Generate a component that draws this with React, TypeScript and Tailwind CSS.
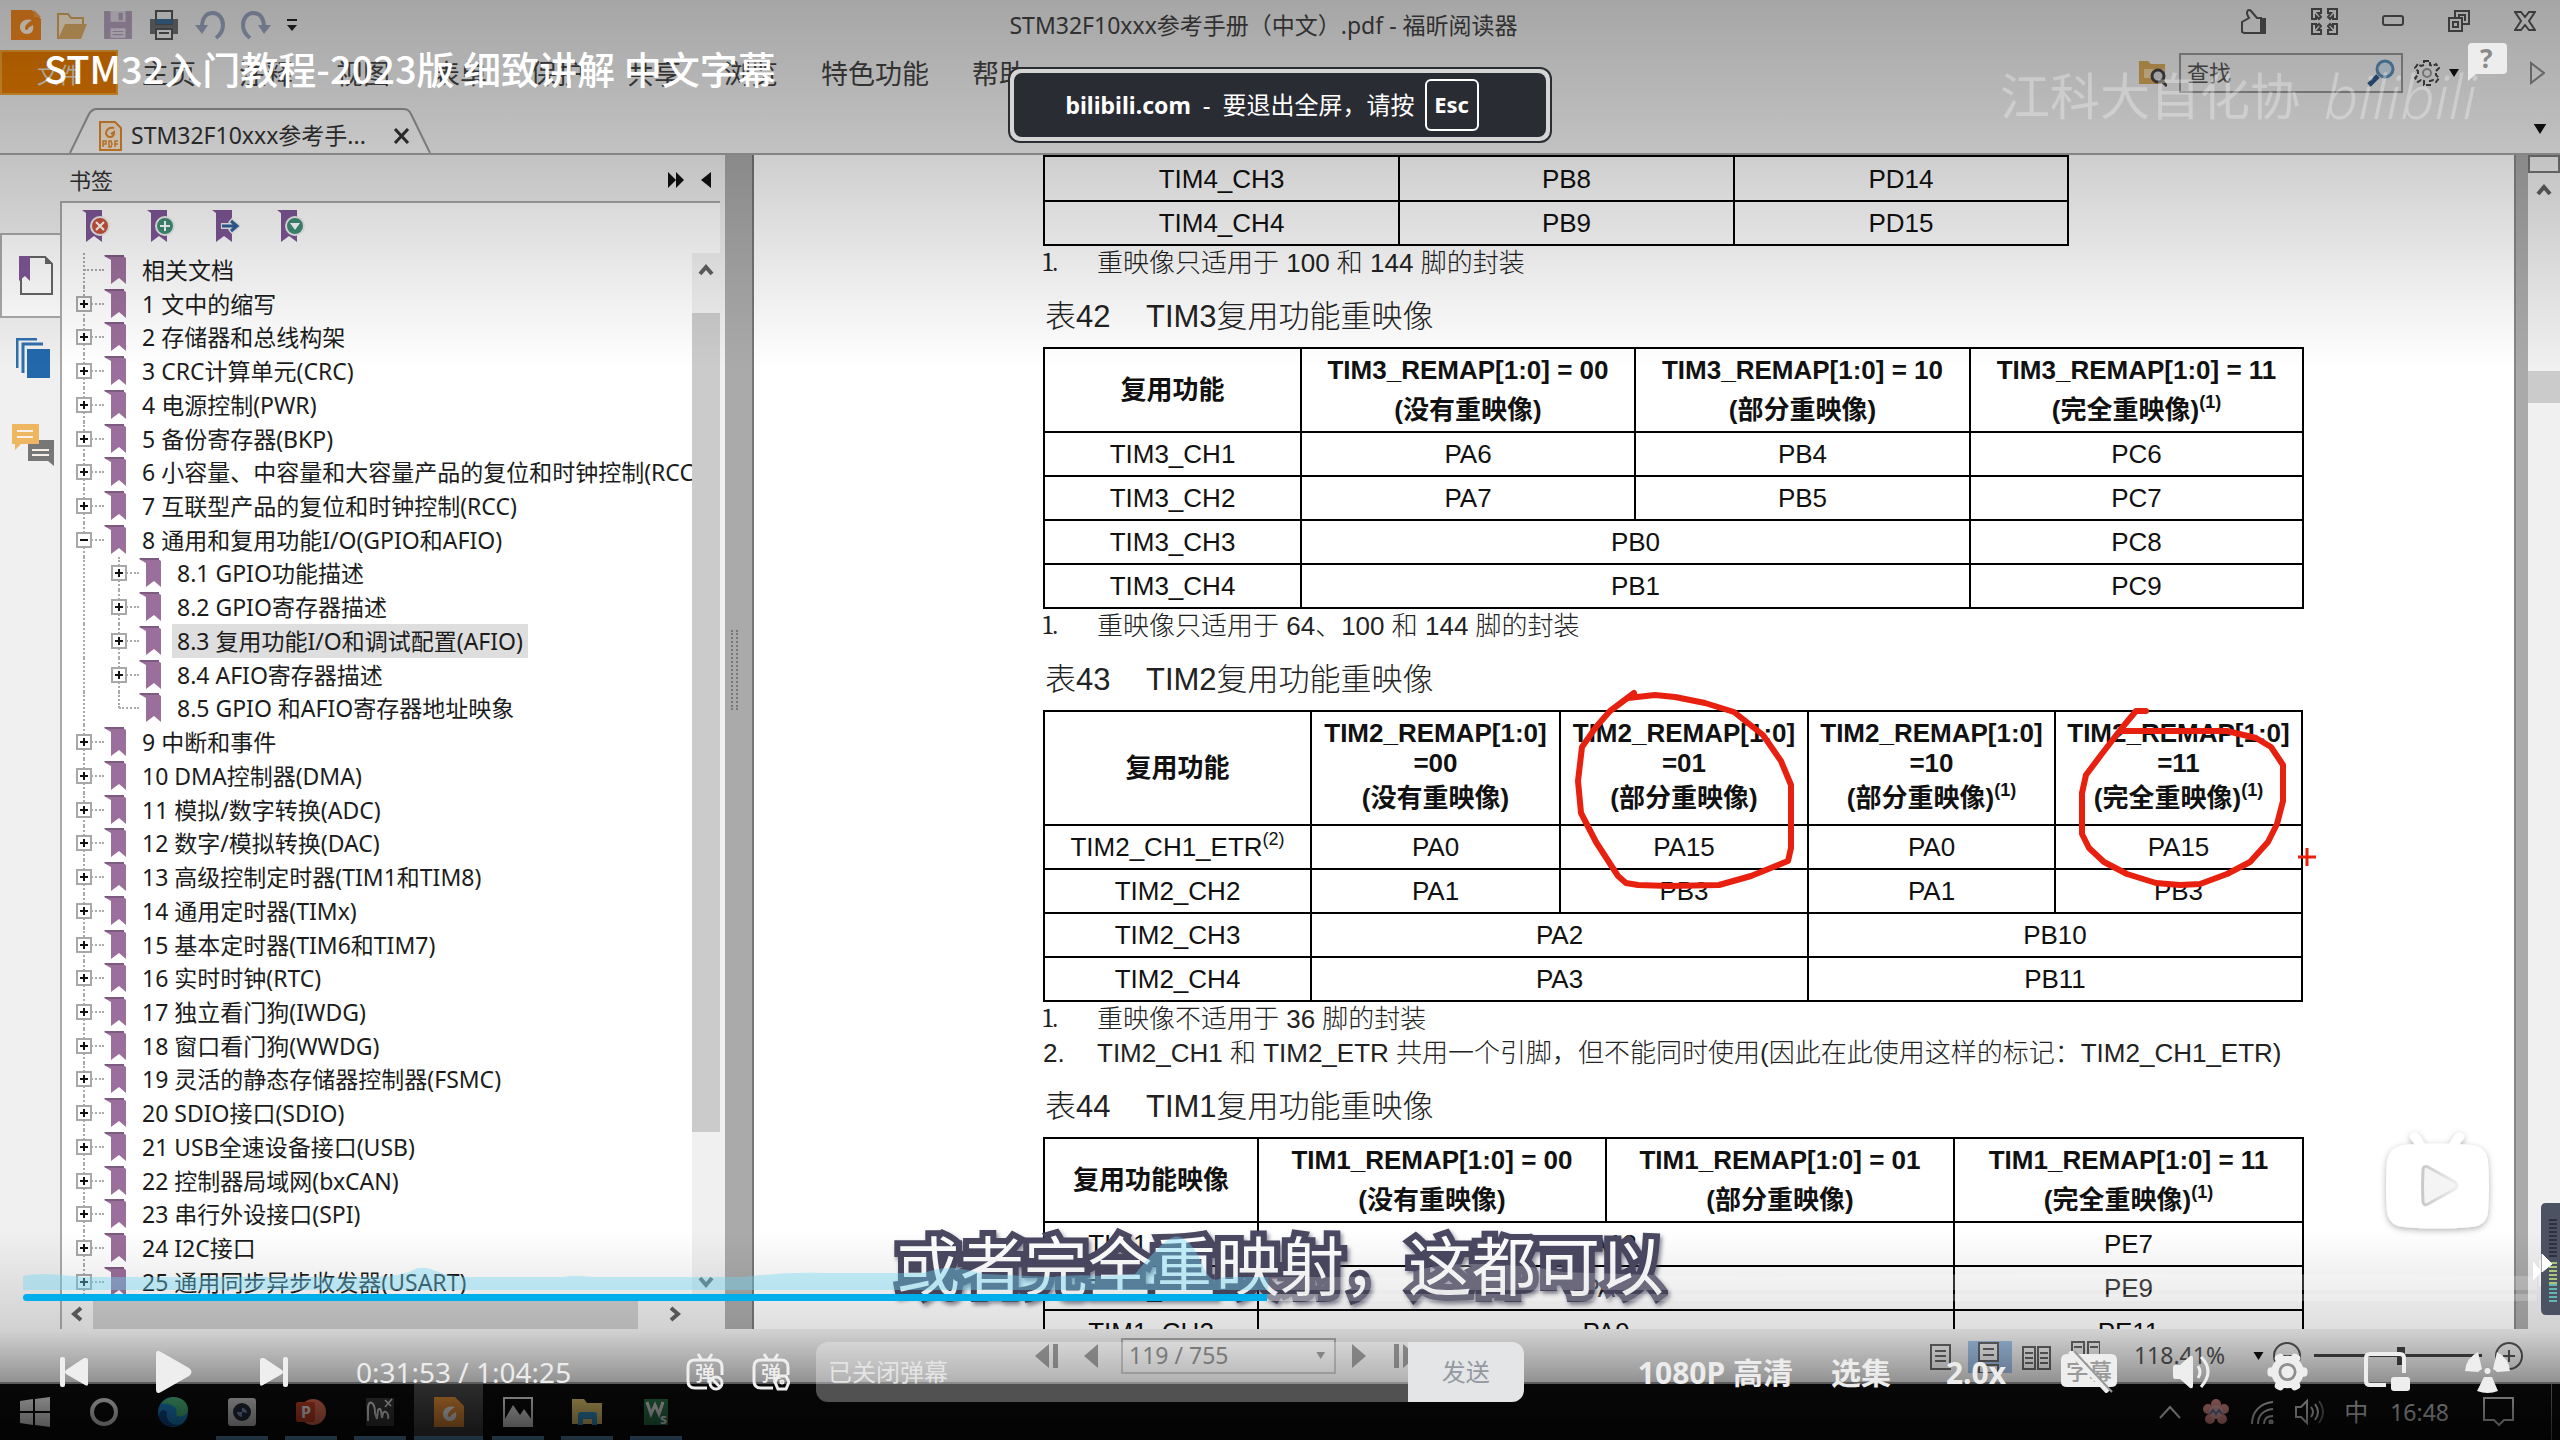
import React from 'react';

interface TreeNode {
  label: string;
  depth?: number;
  open?: boolean;
  leaf?: boolean;
  last?: boolean;
  selected?: boolean;
}

const bookmarks: TreeNode[] = [
  { label: '相关文档', leaf: true },
  { label: '1 文中的缩写' },
  { label: '2 存储器和总线构架' },
  { label: '3 CRC计算单元(CRC)' },
  { label: '4 电源控制(PWR)' },
  { label: '5 备份寄存器(BKP)' },
  { label: '6 小容量、中容量和大容量产品的复位和时钟控制(RCC)' },
  { label: '7 互联型产品的复位和时钟控制(RCC)' },
  { label: '8 通用和复用功能I/O(GPIO和AFIO)', open: true },
  { label: '8.1 GPIO功能描述', depth: 1 },
  { label: '8.2 GPIO寄存器描述', depth: 1 },
  { label: '8.3 复用功能I/O和调试配置(AFIO)', depth: 1, selected: true },
  { label: '8.4 AFIO寄存器描述', depth: 1 },
  { label: '8.5 GPIO 和AFIO寄存器地址映象', depth: 1, leaf: true, last: true },
  { label: '9 中断和事件' },
  { label: '10 DMA控制器(DMA)' },
  { label: '11 模拟/数字转换(ADC)' },
  { label: '12 数字/模拟转换(DAC)' },
  { label: '13 高级控制定时器(TIM1和TIM8)' },
  { label: '14 通用定时器(TIMx)' },
  { label: '15 基本定时器(TIM6和TIM7)' },
  { label: '16 实时时钟(RTC)' },
  { label: '17 独立看门狗(IWDG)' },
  { label: '18 窗口看门狗(WWDG)' },
  { label: '19 灵活的静态存储器控制器(FSMC)' },
  { label: '20 SDIO接口(SDIO)' },
  { label: '21 USB全速设备接口(USB)' },
  { label: '22 控制器局域网(bxCAN)' },
  { label: '23 串行外设接口(SPI)' },
  { label: '24 I2C接口' },
  { label: '25 通用同步异步收发器(USART)' },
];

const menus = ['主页', '注释', '视图', '表单', '保护', '共享', '浏览', '特色功能', '帮助'];

/* ---------- small drawings ---------- */

const FoxitIcon = ({ className = '' }: { className?: string }) => (
  <svg className={className} viewBox="0 0 30 30">
    <path d="M0 0h21l9 9v21H0z" fill="#f58a1f" />
    <path d="M23 0l7 7h-7z" fill="#f7a14d" />
    <path d="M21 10c-7-2-12 2-12 7 0 4 3 7 7 7 5 0 7-4 6-9l-5 3c1 2-3 3-3 0 0-3 3-5 7-8z" fill="#fff4e3" />
  </svg>
);

const Bookmark = ({ className = '' }: { className?: string }) => (
  <svg className={className} viewBox="0 0 22 30">
    <path d="M0 1h19l3 2v26l-7-6-8 6V5z" fill="#9b6f9b" />
    <path d="M0 0h20v2H2z" fill="#7d5a80" />
  </svg>
);

const Chevron = ({ className = '' }: { className?: string }) => (
  <svg className={className} viewBox="0 0 16 12">
    <path d="M2 10l6-7 6 7" fill="none" stroke="#606060" strokeWidth="4" />
  </svg>
);

const DownTriangle = ({ className = '' }: { className?: string }) => (
  <svg className={className} viewBox="0 0 10 8">
    <path d="M0 0h10L5 8z" fill="#111" />
  </svg>
);

const TitleBar = () => (
  <div className="flex h-[50px] shrink-0 items-center">
    <div className="flex flex-1 items-center gap-4 pl-[11px]">
      <FoxitIcon className="size-[30px]" />
      <svg className="size-[30px]" viewBox="0 0 30 30">
        <path d="M1 29V4h10l3 4h12v7" fill="#fdf0d5" stroke="#d9aa5f" strokeWidth="2" />
        <path d="M1 29l7-15h22l-6 15z" fill="#e0b067" />
      </svg>
      <svg className="size-[30px]" viewBox="0 0 28 28">
        <path d="M1 1h26v26H1z" fill="#b5a3bd" />
        <path d="M7 1h14v10H7zM7 17h14v9H7z" fill="#e3dbe6" />
        <path d="M15 3h3v6h-3zM9 20h10M9 23h10" stroke="#b5a3bd" fill="#b5a3bd" />
      </svg>
      <svg className="size-[30px]" viewBox="0 0 30 30">
        <path d="M1 9h28v15H1z" fill="#6f7173" />
        <path d="M7 1h16v13H7zM7 19h16v10H7z" fill="#f2f2f2" stroke="#55585a" strokeWidth="2" />
        <path d="M7 9h16v5H7z" fill="#3f6f9c" />
        <path d="M10 23h10" stroke="#555" strokeWidth="2" />
      </svg>
      <svg className="size-[30px]" viewBox="0 0 30 30">
        <path d="M7 17C7 8 11 3 18 3c6 0 10 6 10 12 0 6-3 10-7 13" fill="none" stroke="#9aa6c0" strokeWidth="4" />
        <path d="M0 15h13l-6 9z" fill="#9aa6c0" />
      </svg>
      <svg className="size-[30px]" viewBox="0 0 30 30">
        <path d="M23 17C23 8 19 3 12 3 6 3 2 9 2 15c0 6 3 10 7 13" fill="none" stroke="#9aa6c0" strokeWidth="4" />
        <path d="M30 15H17l6 9z" fill="#9aa6c0" />
      </svg>
      <svg className="h-3 w-[10px]" viewBox="0 0 10 12">
        <path d="M0 1h10" stroke="#222" strokeWidth="2" />
        <path d="M0 6h10l-5 6z" fill="#222" />
      </svg>
    </div>
    <h1 className="pr-[20px] text-[23px] text-[#444]">STM32F10xxx参考手册（中文）.pdf - 福昕阅读器</h1>
    <div className="flex flex-1 items-center justify-end gap-11 pr-6 pb-2">
      <button aria-label="点赞">
        <svg className="size-[27px]" viewBox="0 0 27 27">
          <path d="M2 24V14l7-4c-4-6-1-10 2-7l6 7h4v15H4z" fill="none" stroke="#555" strokeWidth="2" />
          <path d="M21 10h5v16h-5z" fill="#555" />
        </svg>
      </button>
      <button aria-label="全屏">
        <svg className="size-[27px]" viewBox="0 0 27 27" fill="none" stroke="#555" strokeWidth="2">
          <path d="M1 1h9v4H7l3 4-2 2-3-3v3H1zM26 1h-9v4h3l-3 4 2 2 3-3v3h4zM1 26h9v-4H7l3-4-2-2-3 3v-3H1zM26 26h-9v-4h3l-3-4 2-2 3 3v-3h4z" />
        </svg>
      </button>
      <button aria-label="最小化">
        <svg className="h-3 w-[22px]" viewBox="0 0 22 12">
          <rect x="1" y="1" width="20" height="9" rx="2" fill="none" stroke="#555" strokeWidth="2" />
        </svg>
      </button>
      <button aria-label="还原">
        <svg className="size-[22px]" viewBox="0 0 22 22" fill="none" stroke="#555" strokeWidth="2">
          <path d="M1 8h13v13H1zM5 12h5v5H5zM7 7V1h14v13h-6M11 7V5h6v6" />
        </svg>
      </button>
      <button aria-label="关闭">
        <svg className="h-5 w-[22px]" viewBox="0 0 22 20">
          <path d="M1 1h6l4 5 4-5h6l-6 9 6 9h-6l-4-5-4 5H1l6-9z" fill="none" stroke="#555" strokeWidth="2" />
        </svg>
      </button>
    </div>
  </div>
);

const MenuBar = () => (
  <div className="flex h-[45px] shrink-0 items-center">
    <button className="h-full w-[118px] border-2 border-[#f0a030] bg-[#e67a00] pt-1 text-[22px] text-[#e8e0d0]">文件</button>
    <nav className="flex gap-[43px] pt-1 pl-6 text-[27px] text-[#444]">
      {menus.map((m) => (
        <button key={m}>{m}</button>
      ))}
    </nav>
    <div className="ml-auto flex items-center pr-[15px]">
      <svg className="mr-3 size-7" viewBox="0 0 28 28">
        <path d="M0 2h9l3 3h14v20H0z" fill="#d9a95c" />
        <path d="M5 10h20v9H5z" fill="#f0d3a0" />
        <circle cx="19" cy="17" r="6" fill="#d8d8d8" stroke="#444" strokeWidth="3" />
        <path d="M23 22l5 5" stroke="#444" strokeWidth="3" />
      </svg>
      <label className="flex h-10 w-[224px] items-center border-2 border-[#999] px-[6px]">
        <input aria-label="查找" placeholder="查找" className="min-w-0 flex-1 bg-transparent text-[22px] outline-none placeholder:text-[#555]" />
        <svg className="size-7" viewBox="0 0 28 28">
          <circle cx="18" cy="10" r="8" fill="#d3e3ef" stroke="#5b8fb8" strokeWidth="3" />
          <path d="M11 17l-9 9" stroke="#2c5b8a" strokeWidth="5" />
        </svg>
      </label>
      <svg className="mr-2 ml-[11px] size-[26px]" viewBox="0 0 26 26" fill="none" stroke="#444" strokeWidth="2">
        <path d="M10 1h6v4l3 1 3-2 3 4-3 3v4l3 3-3 4-3-2-3 1v4h-6v-4l-3-1-3 2-3-4 3-3v-4L1 8l3-4 3 2 3-1z" strokeDasharray="5 2" />
        <circle cx="13" cy="13" r="4" stroke="#999" />
      </svg>
      <DownTriangle className="mr-[70px] h-2 w-3" />
      <svg className="h-6 w-[15px]" viewBox="0 0 15 24">
        <path d="M1 2l13 10L1 22z" fill="none" stroke="#888" strokeWidth="2" />
      </svg>
    </div>
  </div>
);

const TabBar = () => (
  <div className="flex h-[60px] shrink-0 items-end border-b-2 border-[#a5a5a5]">
    <div className="relative ml-[69px] h-[45px] w-[362px]">
      <svg className="absolute inset-0 size-full" viewBox="0 0 362 45" preserveAspectRatio="none">
        <path d="M1 45L20 6q3-5 8-5h306q6 0 8 5l19 39" fill="#f7f7f7" stroke="#9a9a9a" strokeWidth="2" />
      </svg>
      <div className="relative flex h-full items-center pt-[10px] pl-[30px]">
        <svg className="h-[30px] w-[23px]" viewBox="0 0 23 30">
          <path d="M1 1h15l6 6v22H1z" fill="#fdebd5" stroke="#e08a2c" strokeWidth="2" />
          <path d="M15 7c-5-1-8 2-8 5 0 2 2 4 4 4 3 0 4-2 4-5l-3 2" fill="none" stroke="#e08a2c" strokeWidth="2" />
          <path d="M4 26v-6h3v3H4M10 20v6h2l1-3-1-3zM16 26v-6h3M16 23h3" fill="none" stroke="#e08a2c" strokeWidth="1.5" />
        </svg>
        <span className="ml-[9px] text-[23px] text-[#333]">STM32F10xxx参考手...</span>
        <button aria-label="关闭标签" className="mr-[21px] ml-auto">
          <svg className="h-4 w-[17px]" viewBox="0 0 17 16">
            <path d="M2 1l13 14M15 1L2 15" stroke="#333" strokeWidth="3" />
          </svg>
        </button>
      </div>
    </div>
    <DownTriangle className="mr-[11px] mb-[19px] ml-auto h-[10px] w-[18px]" />
  </div>
);

const TreeRow = ({ node }: { node: TreeNode }) => (
  <li className="flex min-h-0 flex-1 items-center">
    {node.depth === 1 && <span className="ml-[7px] w-7 shrink-0 self-stretch border-l-2 border-dotted border-[#aaa]" />}
    <span className="relative flex w-7 shrink-0 items-center self-stretch">
      <span className={`absolute top-0 left-[7px] border-l-2 border-dotted border-[#aaa] ${node.last ? 'h-1/2' : 'h-full'}`} />
      <span className="absolute right-0 left-2 border-t-2 border-dotted border-[#aaa]" />
      {!node.leaf && (
        <svg className="relative size-4" viewBox="0 0 16 16">
          <rect x="1" y="1" width="14" height="14" fill="#fff" stroke="#a8a8a8" strokeWidth="2" />
          <path d={node.open ? 'M4 8h8' : 'M4 8h8M8 4v8'} stroke="#111" strokeWidth="2" />
        </svg>
      )}
    </span>
    <Bookmark className="h-[30px] w-[22px] shrink-0" />
    <button className={`ml-[11px] h-full px-[5px] text-[23px] leading-8 whitespace-nowrap text-[#1c1c1c] ${node.selected ? 'bg-[#dedede]' : ''}`}>
      {node.label}
    </button>
  </li>
);

const BookmarkTool = ({ label, children }: { label: string; children: React.ReactNode }) => (
  <button aria-label={label}>
    <svg className="h-8 w-7" viewBox="0 0 28 32">
      <path d="M0 0h20v32l-8-6-8 6V3z" fill="#7f5696" />
      {children}
    </svg>
  </button>
);

const Sidebar = () => (
  <aside className="flex w-[725px] shrink-0 flex-col pr-[5px]">
    <div className="flex h-[46px] shrink-0 items-center pt-1 pr-[9px] pl-[69px]">
      <h2 className="text-[22px] text-[#333]">书签</h2>
      <svg className="ml-auto h-4 w-4" viewBox="0 0 16 16">
        <path d="M0 0l8 8-8 8zM8 0l8 8-8 8z" fill="#111" />
      </svg>
      <svg className="ml-[17px] h-4 w-[10px]" viewBox="0 0 10 16">
        <path d="M10 0v16L0 8z" fill="#111" />
      </svg>
    </div>
    <div className="flex min-h-0 flex-1">
      <div className="w-[60px] shrink-0 pt-8">
        <button aria-label="书签面板" className="-mr-[2px] flex h-[85px] w-[62px] items-center justify-center border-2 border-r-0 border-[#aaa] bg-white pl-2">
          <svg className="h-[40px] w-[34px]" viewBox="0 0 34 40">
            <path d="M2 1h24l7 7v30H2z" fill="#fff" stroke="#666" strokeWidth="2" />
            <path d="M0 0h11v25l-5-5-6 5z" fill="#7f5696" />
            <path d="M26 0l8 8h-8z" fill="#666" />
          </svg>
        </button>
        <div className="flex flex-col items-center gap-[46px] pt-5 pl-[6px]">
          <button aria-label="页面面板">
            <svg className="h-10 w-[34px]" viewBox="0 0 34 40">
              <path d="M1 30V1h20M7 35V6h20" fill="none" stroke="#2f6fae" strokeWidth="3" />
              <path d="M11 11h23v29H11z" fill="#2268ab" />
            </svg>
          </button>
          <button aria-label="注释面板">
            <svg className="h-[42px] w-[42px]" viewBox="0 0 42 42">
              <path d="M16 16h26v26l-6-5H16z" fill="#777" />
              <path d="M0 0h27v20H9l-6 6v-6H0z" fill="#efb662" />
              <path d="M5 7h16M5 13h16M20 26h17M20 31h17" stroke="#f6f0e6" strokeWidth="2" />
            </svg>
          </button>
        </div>
      </div>
      <div className="flex min-w-0 flex-1 flex-col border-t-2 border-l-2 border-[#aaa] bg-white">
        <div className="flex h-[50px] shrink-0 items-center gap-[37px] pb-1 pl-5">
          <BookmarkTool label="删除书签">
            <circle cx="18" cy="16" r="9" fill="#c9543d" stroke="#eee" strokeWidth="2" />
            <path d="M14 12l8 8M22 12l-8 8" stroke="#fff" strokeWidth="2" />
          </BookmarkTool>
          <BookmarkTool label="新建书签">
            <circle cx="18" cy="16" r="9" fill="#3e8f77" stroke="#eee" strokeWidth="2" />
            <path d="M13 16h10M18 11v10" stroke="#fff" strokeWidth="2" />
          </BookmarkTool>
          <BookmarkTool label="转到书签">
            <path d="M9 16h13M18 10l7 6-7 6" fill="none" stroke="#eee" strokeWidth="6" />
            <path d="M10 16h14M19 11l6 5-6 5" fill="none" stroke="#2f6098" strokeWidth="3" />
          </BookmarkTool>
          <BookmarkTool label="展开书签">
            <circle cx="18" cy="16" r="9" fill="#3e8f77" stroke="#eee" strokeWidth="2" />
            <path d="M13 13h10l-5 7z" fill="#fff" />
          </BookmarkTool>
        </div>
        <div className="flex min-h-0 flex-1">
          <ul className="flex min-w-0 flex-1 flex-col overflow-hidden pl-[14px]">
            {bookmarks.map((node) => (
              <TreeRow key={node.label} node={node} />
            ))}
          </ul>
          <div className="flex w-7 shrink-0 flex-col items-center bg-[#f0f0f0] py-[10px]">
            <Chevron className="h-[14px] w-4" />
            <div className="mt-9 w-full grow-[817] bg-[#cbcbcb]" />
            <div className="grow-[143]" />
            <Chevron className="h-[14px] w-4 rotate-180" />
          </div>
        </div>
        <div className="flex h-[30px] shrink-0 items-center bg-[#f0f0f0] px-[7px]">
          <Chevron className="h-3 w-4 -rotate-90" />
          <div className="ml-2 h-full w-[545px] bg-[#cdcdcd]" />
          <Chevron className="ml-auto mr-[30px] h-3 w-4 rotate-90" />
        </div>
      </div>
    </div>
  </aside>
);

/* ---------- the manual page ---------- */

const Cell = ({ children, span = 1 }: { children?: React.ReactNode; span?: number }) => (
  <td colSpan={span} className="border-2 border-black p-0 text-center leading-8">
    {children}
  </td>
);

const Sup = ({ children }: { children: React.ReactNode }) => (
  <sup className="-top-[11px] text-[18px]">{children}</sup>
);

const Head = ({ lines, note }: { lines: string[]; note?: string }) => (
  <th className="border-2 border-black p-0 text-center font-bold whitespace-nowrap">
    {lines.map((line, i) => (
      <div key={line} className={i === lines.length - 1 || lines.length === 2 ? 'leading-10' : 'leading-[30px]'}>
        {line}
        {note && i === lines.length - 1 && <Sup>{note}</Sup>}
      </div>
    ))}
  </th>
);

const Note = ({ n, serif, children }: { n: string; serif?: boolean; children: React.ReactNode }) => (
  <p className="flex h-[34px] items-center text-[26px] font-light whitespace-nowrap text-[#222]">
    <span className={`w-[54px] ${serif ? 'font-serif' : ''}`}>{n}</span>
    <span>{children}</span>
  </p>
);

const Caption = ({ no, children }: { no: string; children: React.ReactNode }) => (
  <h3 className="flex h-[67px] items-center pt-2 pl-[2px] text-[31px] font-light text-[#222]">
    <span className="w-[101px]">{no}</span>
    <span>{children}</span>
  </h3>
);

const tableClass = 'table-fixed border-collapse text-[26px] text-[#111]';

const ManualPage = () => (
  <main className='relative min-w-0 flex-1 overflow-hidden bg-white pl-[289px] font-["Liberation_Sans","Noto_Sans_CJK_SC",sans-serif]'>
    <table className={`${tableClass} w-[1026px]`}>
      <colgroup>
        <col className="w-[355px]" />
        <col className="w-[335px]" />
        <col />
      </colgroup>
      <tbody>
        <tr className="h-[45px]"><Cell>TIM4_CH3</Cell><Cell>PB8</Cell><Cell>PD14</Cell></tr>
        <tr className="h-[44px]"><Cell>TIM4_CH4</Cell><Cell>PB9</Cell><Cell>PD15</Cell></tr>
      </tbody>
    </table>
    <Note n="1." serif>重映像只适用于 100 和 144 脚的封装</Note>

    <Caption no="表42">TIM3复用功能重映像</Caption>
    <table className={`${tableClass} w-[1261px]`}>
      <colgroup>
        <col className="w-[257px]" />
        <col className="w-[334px]" />
        <col className="w-[335px]" />
        <col />
      </colgroup>
      <thead>
        <tr className="h-[84px]">
          <Head lines={['复用功能']} />
          <Head lines={['TIM3_REMAP[1:0] = 00', '(没有重映像)']} />
          <Head lines={['TIM3_REMAP[1:0] = 10', '(部分重映像)']} />
          <Head lines={['TIM3_REMAP[1:0] = 11', '(完全重映像)']} note="(1)" />
        </tr>
      </thead>
      <tbody>
        <tr className="h-[44px]"><Cell>TIM3_CH1</Cell><Cell>PA6</Cell><Cell>PB4</Cell><Cell>PC6</Cell></tr>
        <tr className="h-[44px]"><Cell>TIM3_CH2</Cell><Cell>PA7</Cell><Cell>PB5</Cell><Cell>PC7</Cell></tr>
        <tr className="h-[44px]"><Cell>TIM3_CH3</Cell><Cell span={2}>PB0</Cell><Cell>PC8</Cell></tr>
        <tr className="h-[44px]"><Cell>TIM3_CH4</Cell><Cell span={2}>PB1</Cell><Cell>PC9</Cell></tr>
      </tbody>
    </table>
    <Note n="1." serif>重映像只适用于 64、100 和 144 脚的封装</Note>

    <Caption no="表43">TIM2复用功能重映像</Caption>
    <table className={`${tableClass} w-[1260px]`}>
      <colgroup>
        <col className="w-[267px]" />
        <col className="w-[249px]" />
        <col className="w-[248px]" />
        <col className="w-[247px]" />
        <col />
      </colgroup>
      <thead>
        <tr className="h-[114px]">
          <Head lines={['复用功能']} />
          <Head lines={['TIM2_REMAP[1:0]', '=00', '(没有重映像)']} />
          <Head lines={['TIM2_REMAP[1:0]', '=01', '(部分重映像)']} />
          <Head lines={['TIM2_REMAP[1:0]', '=10', '(部分重映像)']} note="(1)" />
          <Head lines={['TIM2_REMAP[1:0]', '=11', '(完全重映像)']} note="(1)" />
        </tr>
      </thead>
      <tbody>
        <tr className="h-[44px]">
          <Cell>TIM2_CH1_ETR<Sup>(2)</Sup></Cell>
          <Cell>PA0</Cell><Cell>PA15</Cell><Cell>PA0</Cell><Cell>PA15</Cell>
        </tr>
        <tr className="h-[44px]"><Cell>TIM2_CH2</Cell><Cell>PA1</Cell><Cell>PB3</Cell><Cell>PA1</Cell><Cell>PB3</Cell></tr>
        <tr className="h-[44px]"><Cell>TIM2_CH3</Cell><Cell span={2}>PA2</Cell><Cell span={2}>PB10</Cell></tr>
        <tr className="h-[44px]"><Cell>TIM2_CH4</Cell><Cell span={2}>PA3</Cell><Cell span={2}>PB11</Cell></tr>
      </tbody>
    </table>
    <Note n="1." serif>重映像不适用于 36 脚的封装</Note>
    <Note n="2.">TIM2_CH1 和 TIM2_ETR 共用一个引脚，但不能同时使用(因此在此使用这样的标记：TIM2_CH1_ETR)</Note>

    <Caption no="表44">TIM1复用功能重映像</Caption>
    <table className={`${tableClass} w-[1261px]`}>
      <colgroup>
        <col className="w-[214px]" />
        <col className="w-[348px]" />
        <col className="w-[348px]" />
        <col />
      </colgroup>
      <thead>
        <tr className="h-[84px]">
          <Head lines={['复用功能映像']} />
          <Head lines={['TIM1_REMAP[1:0] = 00', '(没有重映像)']} />
          <Head lines={['TIM1_REMAP[1:0] = 01', '(部分重映像)']} />
          <Head lines={['TIM1_REMAP[1:0] = 11', '(完全重映像)']} note="(1)" />
        </tr>
      </thead>
      <tbody>
        <tr className="h-[44px]"><Cell>TIM1_ETR</Cell><Cell span={2}>PA12</Cell><Cell>PE7</Cell></tr>
        <tr className="h-[44px]"><Cell>TIM1_CH1</Cell><Cell span={2}>PA8</Cell><Cell>PE9</Cell></tr>
        <tr className="h-[44px]"><Cell>TIM1_CH2</Cell><Cell span={2}>PA9</Cell><Cell>PE11</Cell></tr>
      </tbody>
    </table>

    {/* hand-drawn pen marks */}
    <svg className="pointer-events-none absolute top-0 left-0 h-[800px] w-[1700px]" viewBox="754 155 1700 800" fill="none" stroke="#e8200f" strokeWidth="6" strokeLinejoin="round" strokeLinecap="round">
      <path d="M1634 693L1610 711L1596 727L1582 747L1578 781L1581 813L1596 842L1618 876L1626 883L1638 885L1669 886L1719 885L1751 876L1788 861L1791 848L1791 785L1781 761L1763 735L1734 712L1705 703L1675 697L1655 695L1628 698" />
      <path d="M2146 711H2136L2121 729L2101 755L2086 775L2082 793V834L2089 848L2104 862L2127 874L2156 883L2180 885L2200 884L2227 874L2250 862L2268 842L2277 824L2283 801V765L2271 747L2256 738L2227 731H2121" />
      <path d="M2298 857h18M2307 848v18" strokeWidth="3" strokeLinecap="butt" />
    </svg>
  </main>
);

const StatusBar = () => (
  <div className="flex h-[55px] shrink-0 items-center border-b-2 border-[#999] bg-[#f0f0f0]">
    <div className="flex items-center pl-[1035px]">
      <svg className="mr-[26px] h-6 w-[23px]" viewBox="0 0 23 24">
        <path d="M14 0v24L0 12zM18 0h5v24h-5z" fill="#666" />
      </svg>
      <svg className="mr-[23px] h-6 w-[14px]" viewBox="0 0 14 24"><path d="M14 0v24L0 12z" fill="#666" /></svg>
      <label className="flex h-9 w-[215px] items-center border-2 border-[#aaa] bg-[#f6f6f6] pr-2">
        <select aria-label="页码" className="w-full appearance-none bg-transparent pl-[6px] text-[23px] text-[#555]">
          <option>119 / 755</option>
        </select>
        <DownTriangle className="h-[7px] w-[10px] opacity-60" />
      </label>
      <svg className="ml-4 h-6 w-[14px]" viewBox="0 0 14 24"><path d="M0 0v24l14-12z" fill="#666" /></svg>
      <svg className="ml-7 h-6 w-[23px]" viewBox="0 0 23 24"><path d="M9 0v24l14-12zM0 0h5v24H0z" fill="#666" /></svg>
    </div>
    <div className="ml-auto flex items-center pr-9">
      <svg className="mt-[2px] h-8 w-[170px]" viewBox="0 0 170 32" fill="none" stroke="#666" strokeWidth="2">
        <path d="M38 0h44v32H38z" fill="#9fbfe4" stroke="none" />
        <path d="M1 4h19v24H1zM5 10h11M5 15h11M5 20h11" />
        <path d="M49 2h19v18H49zM53 8h11M53 14h11M49 24h19v8H49z" fill="#f0f0f0" />
        <path d="M93 6h12v22H93zM108 6h12v22h-12zM95 12h8M95 17h8M95 22h8M110 12h8M110 17h8M110 22h8" />
        <path d="M142 1h12v13h-12zM158 1h12v13h-12zM144 6h8M160 6h8M142 18h12v13h-12zM158 18h12v13h-12z" />
      </svg>
      <span className="ml-[34px] text-[23px] text-[#555]">118.41%</span>
      <DownTriangle className="ml-7 h-2 w-[11px]" />
      <svg className="ml-2 size-[30px]" viewBox="0 0 30 30" fill="none" stroke="#555" strokeWidth="2">
        <circle cx="15" cy="15" r="13" /><path d="M9 15h12" />
      </svg>
      <input
        type="range"
        aria-label="缩放"
        defaultValue={52}
        className="mx-3 h-[3px] w-[168px] appearance-none bg-[#444] [&::-webkit-slider-thumb]:h-[18px] [&::-webkit-slider-thumb]:w-2 [&::-webkit-slider-thumb]:appearance-none [&::-webkit-slider-thumb]:bg-[#444]"
      />
      <svg className="size-[30px]" viewBox="0 0 30 30" fill="none" stroke="#555" strokeWidth="2">
        <circle cx="15" cy="15" r="13" /><path d="M9 15h12M15 9v12" />
      </svg>
    </div>
  </div>
);

/* ---------- windows taskbar ---------- */

const TaskButton = ({ label, running, active, children }: { label: string; running?: boolean; active?: boolean; children: React.ReactNode }) => (
  <button aria-label={label} className={`flex w-[69px] flex-col items-center justify-between pt-[13px] ${active ? 'bg-[#4a4a4a]' : ''}`}>
    <svg className="size-[30px]" viewBox="0 0 30 30">{children}</svg>
    <span className={`h-1 ${active ? 'w-full' : 'w-[52px]'} ${running ? 'bg-[#76b9ed]' : ''}`} />
  </button>
);

const Taskbar = () => (
  <footer className="flex h-14 shrink-0 items-stretch bg-[#0c0c0c]">
    <TaskButton label="开始">
      <path d="M0 4l13-2v12H0zM15 2l15-2v14H15zM0 16h13v12L0 26zM15 16h15v14l-15-2z" fill="#fff" />
    </TaskButton>
    <TaskButton label="Cortana">
      <circle cx="15" cy="15" r="12" fill="none" stroke="#eee" strokeWidth="4" />
    </TaskButton>
    <TaskButton label="Edge">
      <circle cx="15" cy="15" r="15" fill="#1f8fd6" />
      <path d="M3 7C10-4 30-1 30 13c0 6-9 8-12 5 3-7-5-13-15-11z" fill="#4fc98a" />
      <path d="M9 15c-2 8 5 15 14 12-6 4-19 3-22-7 0-7 5-9 8-5z" fill="#0f4f9b" />
    </TaskButton>
    <TaskButton label="相机" running>
      <rect x="1" y="1" width="28" height="28" rx="3" fill="#ddd" />
      <circle cx="15" cy="15" r="9" fill="#26303c" />
      <path d="M15 11a5 5 0 0 1 5 5l-5-1zM15 20a5 5 0 0 1-5-5h5z" fill="#7f9cc0" />
    </TaskButton>
    <TaskButton label="PowerPoint" running>
      <circle cx="17" cy="15" r="13" fill="#f0745a" />
      <rect x="0" y="5" width="19" height="20" rx="2" fill="#d4452a" />
      <text x="5" y="21" fontSize="16" fontWeight="700" fill="#fff">P</text>
    </TaskButton>
    <TaskButton label="示波器" running>
      <path d="M1 1h28v28H1z" fill="#3c3c3c" />
      <path d="M3 24V10q1-6 4-4t3 10l2 6 1-9q2-3 3 1l1 7q1-8 4-6t2 7" fill="none" stroke="#eee" strokeWidth="2" />
      <path d="M20 3l6 6M27 2l-7 8" stroke="#eee" strokeWidth="1.5" />
    </TaskButton>
    <TaskButton label="福昕阅读器" running active>
      <path d="M0 0h21l9 9v21H0z" fill="#f7993c" />
      <path d="M21 10c-7-2-12 2-12 7 0 4 3 7 7 7 5 0 7-4 6-9l-5 3c1 2-3 3-3 0 0-3 3-5 7-8z" fill="#fff" />
    </TaskButton>
    <TaskButton label="照片" running>
      <path d="M1 1h28v28H1z" fill="#0c0c0c" stroke="#eee" strokeWidth="2" />
      <path d="M2 22L10 8l7 10 4-6 8 11v6H2z" fill="#eee" />
    </TaskButton>
    <TaskButton label="文件资源管理器" running>
      <path d="M0 2h12l3 4h15v21H0z" fill="#f5d77b" />
      <path d="M6 28V18q0-3 3-3h13q3 0 3 3v10h-5v-6h-9v6z" fill="#3ba0d8" />
    </TaskButton>
    <TaskButton label="WPS" running>
      <path d="M3 2h24v26H3z" fill="#2c7c4e" />
      <path d="M6 5l4 12 4-9 4 9 4-12" fill="none" stroke="#eee" strokeWidth="3" />
      <text x="19" y="27" fontSize="14" fontWeight="700" fill="#fff">s</text>
    </TaskButton>
    <div className="mr-2 ml-auto flex items-center gap-5 border-r border-[#777] pr-[37px]">
      <svg className="h-4 w-6" viewBox="0 0 24 16"><path d="M2 14L12 3l10 11" fill="none" stroke="#eee" strokeWidth="2" /></svg>
      <svg className="size-7" viewBox="0 0 28 28">
        <circle cx="14" cy="6" r="5" fill="#f29a96" /><circle cx="6" cy="11" r="5" fill="#f29a96" /><circle cx="22" cy="11" r="5" fill="#f29a96" />
        <circle cx="8" cy="21" r="5" fill="#f29a96" /><circle cx="20" cy="21" r="5" fill="#f29a96" /><circle cx="14" cy="14" r="7" fill="#f6b5b0" />
        <path d="M8 16l3-4 3 4 3-4 3 4" fill="none" stroke="#6a7fb5" strokeWidth="2" />
      </svg>
      <svg className="size-6" viewBox="0 0 24 24" fill="none" stroke="#ddd" strokeWidth="2">
        <path d="M2 24C2 12 10 3 23 2M8 24c0-9 6-14 15-15M14 24c0-5 3-8 9-8" /><circle cx="21" cy="22" r="1.5" />
      </svg>
      <svg className="h-7 w-[30px]" viewBox="0 0 30 28" fill="none" stroke="#ddd" strokeWidth="2">
        <path d="M2 9h5l6-6v22l-6-6H2z" /><path d="M17 9q4 5 0 10M21 6q6 8 0 16" /><path d="M25 3q8 11 0 22" stroke="#777" />
      </svg>
      <span className="text-2xl text-[#ddd]">中</span>
      <time className="px-[2px] text-[23px] text-[#ddd]">16:48</time>
      <svg className="ml-3 h-[30px] w-[31px]" viewBox="0 0 31 30">
        <path d="M1 1h29v22H21l-5 5-5-5H1z" fill="none" stroke="#ddd" strokeWidth="2" />
      </svg>
    </div>
  </footer>
);

/* ---------- player overlay ---------- */

const ctl = 'shrink-0 text-[#eeeeee]';
const heat = 'M0 56V42Q10 40 20 40T60 43H350Q380 42 390 36T420 40L440 43H540Q550 41 570 43H720Q760 38 800 39H900Q920 33 932 34T960 40L1030 43Q1050 40 1080 42L1112 40Q1130 18 1142 8T1162 6Q1172 12 1180 32T1200 43H1380Q1400 30 1450 30T1540 38Q1700 44 1800 42T2100 40T2514 42V56Z';

const DanmakuIcon = ({ label, children }: { label: string; children: React.ReactNode }) => (
  <button aria-label={label} className={ctl}>
    <svg className="h-[38px] w-[38px]" viewBox="0 0 38 38" fill="none" stroke="currentColor" strokeWidth="3">
      <path d="M21 35H9q-7 0-7-7V14q0-7 7-7h20q7 0 7 7v8M12 1l4 6M26 1l-4 6" />
      <text x="9" y="28" fontSize="20" fontWeight="500" fill="currentColor" stroke="none">弹</text>
      {children}
    </svg>
  </button>
);

const PlayerControls = () => (
  <div className="absolute inset-x-0 bottom-0 flex flex-col pb-[38px]">
    <div className="flex flex-col gap-1 px-[23px]">
      <svg className="h-14 w-full" viewBox="0 0 2514 56" preserveAspectRatio="none">
        <clipPath id="played"><path d="M0 0h1245v56H0z" /></clipPath>
        <clipPath id="rest"><path d="M1245 0h1269v56H1245z" /></clipPath>
        <path d={heat} fill="#6fd7f4" fillOpacity="0.4" clipPath="url(#played)" />
        <path d={heat} fill="#fff" fillOpacity="0.2" clipPath="url(#rest)" />
      </svg>
      <input
        type="range"
        aria-label="播放进度"
        min={0}
        max={3865}
        defaultValue={1913}
        className="h-[7px] w-full appearance-none rounded-full bg-[linear-gradient(to_right,#00aeec_49.5%,rgba(255,255,255,0.4)_49.5%,rgba(255,255,255,0.4)_51.5%,rgba(255,255,255,0.2)_51.5%)] [&::-webkit-slider-thumb]:h-[7px] [&::-webkit-slider-thumb]:w-0 [&::-webkit-slider-thumb]:appearance-none"
      />
    </div>
    <div className="mt-[41px] flex h-[60px] items-center pr-[50px] pl-[60px]">
      <div className="flex items-center gap-[68px]">
        <button aria-label="上一个" className={ctl}>
          <svg className="h-[30px] w-7" viewBox="0 0 28 30" fill="currentColor">
            <rect x="0" y="0" width="5" height="30" rx="2" /><path d="M26 1q2 0 2 2v24q0 3-3 1L6 17q-2-2 0-4L24 1z" />
          </svg>
        </button>
        <button aria-label="播放" className={ctl}>
          <svg className="h-[42px] w-9" viewBox="0 0 36 42" fill="currentColor">
            <path d="M0 3q0-5 5-2l28 16q5 4 0 8L5 41q-5 3-5-3z" />
          </svg>
        </button>
        <button aria-label="下一个" className={ctl}>
          <svg className="h-[30px] w-7" viewBox="0 0 28 30" fill="currentColor">
            <rect x="23" y="0" width="5" height="30" rx="2" /><path d="M2 1Q0 1 0 3v24q0 3 3 1l19-11q2-2 0-4L4 1z" />
          </svg>
        </button>
        <span className="w-[262px] text-[28px] leading-8 whitespace-nowrap text-[#ececec]">0:31:53 / 1:04:25</span>
      </div>
      <div className="ml-[68px] flex items-center gap-7">
        <DanmakuIcon label="弹幕开关">
          <circle cx="30" cy="30" r="6" /><path d="M26 26l8 8" />
        </DanmakuIcon>
        <DanmakuIcon label="弹幕设置">
          <path d="M26 23h8l3 6-3 7h-8l-3-7z" /><circle cx="30" cy="29" r="1" />
        </DanmakuIcon>
      </div>
      <form className="mr-[114px] ml-[26px] flex h-full min-w-0 flex-1 overflow-hidden rounded-xl" onSubmit={(e) => e.preventDefault()}>
        <input aria-label="弹幕" placeholder="已关闭弹幕" className="min-w-0 flex-1 bg-white/30 px-3 text-2xl outline-none placeholder:text-[#e4e4e4]" />
        <button className="w-[116px] bg-[#e3e5e7] text-2xl text-[#9499a0]">发送</button>
      </form>
      <div className="flex items-center gap-[55px] text-[30px] font-bold whitespace-nowrap text-[#ececec]">
        <div className="flex gap-[38px]">
          <button>1080P 高清</button>
          <button>选集</button>
        </div>
        <button>2.0x</button>
        <button aria-label="字幕" className={ctl}>
          <svg className="h-[42px] w-14" viewBox="0 0 56 42">
            <path d="M6 3h44q6 0 6 6v22q0 5-6 5H6q-6 0-6-5V9q0-6 6-6z" fill="currentColor" />
            <text x="5" y="29" fontSize="23" fontWeight="500" fill="#999">字幕</text>
            <path d="M9 0l38 41" stroke="currentColor" strokeWidth="5" />
            <path d="M13 0l38 41" stroke="#999" strokeWidth="2" />
          </svg>
        </button>
        <button aria-label="音量" className={ctl}>
          <svg className="h-9 w-[39px]" viewBox="0 0 39 36" fill="none" stroke="currentColor" strokeWidth="3">
            <path d="M3 11h5L18 2q3-1 3 2v28q0 3-3 2L8 25H3q-2 0-2-3v-8q0-3 2-3z" fill="currentColor" stroke="none" />
            <path d="M26 12q4 6 0 12M29 3q14 14 0 30" />
          </svg>
        </button>
        <button aria-label="设置" className={ctl}>
          <svg className="h-[42px] w-[43px]" viewBox="0 0 44 44">
            <g fill="currentColor">
              <rect x="17" y="1" width="10" height="42" rx="4" transform="rotate(30 22 22)" />
              <rect x="17" y="1" width="10" height="42" rx="4" transform="rotate(90 22 22)" />
              <rect x="17" y="1" width="10" height="42" rx="4" transform="rotate(150 22 22)" />
              <circle cx="22" cy="22" r="17" />
            </g>
            <circle cx="22" cy="22" r="8" fill="none" stroke="#8f8f8f" strokeWidth="3" />
          </svg>
        </button>
        <button aria-label="画中画" className={ctl}>
          <svg className="h-10 w-[46px]" viewBox="0 0 46 40">
            <path d="M22 33H6q-4 0-4-4V6q0-4 4-4h30q4 0 4 4v15" fill="none" stroke="currentColor" strokeWidth="4" />
            <rect x="27" y="25" width="19" height="14" rx="3" fill="currentColor" />
          </svg>
        </button>
        <button aria-label="退出全屏" className={ctl}>
          <svg className="h-[42px] w-[45px]" viewBox="0 0 45 42" fill="currentColor">
            <path d="M13 1q-12 6-13 19l13 1q2-2 4-3zM32 1q12 6 13 19l-13 1q-2-2-4-3zM19 26h8l6 14q-10 4-21 0z" />
            <circle cx="22.500" cy="20" r="3" />
          </svg>
        </button>
      </div>
    </div>
  </div>
);

const Player = () => (
  <>
    <p className="absolute inset-x-0 bottom-[136px] text-center text-[64px] leading-[76px] text-white [-webkit-text-stroke:12px_#4b4962] [paint-order:stroke_fill] drop-shadow-[2px_3px_2px_rgba(60,58,85,0.6)]">
      或者完全重映射，这都可以
    </p>

    <div className="pointer-events-none absolute inset-x-0 top-0 h-[370px] bg-[linear-gradient(to_bottom,rgba(0,0,0,0.31),rgba(0,0,0,0.19)_43%,rgba(0,0,0,0.08)_75%,transparent)]" />
    <div className="pointer-events-none absolute inset-x-0 bottom-0 h-[210px] bg-[linear-gradient(to_top,rgba(0,0,0,0.75),rgba(0,0,0,0.4)_27%,rgba(0,0,0,0.13)_52%,transparent)]" />

    {/* channel watermark */}
    <div className="absolute top-[58px] right-[50px] flex items-center gap-6 text-white/30">
      <span className="text-[50px] leading-[76px]">江科大自化协</span>
      <span className="w-[186px] text-[60px] leading-[76px] font-light italic">bilibili</span>
    </div>

    <h2 className='absolute top-[42px] left-[44px] font-["Noto_Sans_CJK_SC",sans-serif] text-[38px] leading-[52px] font-medium text-white'>
      STM32入门教程-2023版 细致讲解 中文字幕
    </h2>

    <button aria-label="帮助" className="absolute top-[43px] right-[53px]">
      <svg className="h-[38px] w-[39px]" viewBox="0 0 39 38">
        <path d="M4 0h31q4 0 4 4v23q0 4-4 4H8l-8 7V4q0-4 4-4z" fill="#ededed" />
        <text x="12" y="25" fontSize="26" fontWeight="700" fill="#8a8a8a">?</text>
      </svg>
    </button>

    <div role="alert" className="absolute top-[67px] left-1/2 -translate-x-1/2 rounded-xl border-2 border-[#2b2d35] bg-[#d5d5d5] p-1">
      <div className="flex h-16 w-[532px] items-center justify-center rounded-lg bg-[#2a2c34] text-2xl whitespace-nowrap text-white">
        <b className="text-[23px]">bilibili.com</b>
        <span className="mx-3">-</span>
        <span>要退出全屏，请按</span>
        <kbd className='mr-4 ml-[10px] flex h-[52px] w-[54px] items-center justify-center rounded-md border-2 border-white font-["Noto_Sans",sans-serif] text-[22px] font-bold'>
          Esc
        </kbd>
      </div>
    </div>

    <svg className="absolute right-[61px] bottom-[202px] h-[110px] w-[123px]" viewBox="0 0 123 110">
      <defs>
        <filter id="tv" x="-20%" y="-20%" width="140%" height="140%">
          <feDropShadow dx="0" dy="2" stdDeviation="3" floodOpacity="0.3" />
        </filter>
        <linearGradient id="tvPlay" x1="0" x2="1"><stop offset="0" stopColor="#c9c9c9" /><stop offset="1" stopColor="#eee" /></linearGradient>
      </defs>
      <g filter="url(#tv)" fill="#fff">
        <path d="M36 5q5-2 8 3l8 13H42L34 10q-1-3 2-5zM86 5q-5-2-8 3l-8 13h10l8-11q1-3-2-5z" />
        <path d="M28 17q33-3 67 0 16 2 17 17 2 25 0 49-1 15-17 16-33 3-67 0-15-1-17-16-2-24 0-49 2-15 17-17z" />
      </g>
      <path d="M47 42q0-5 5-3l27 15q4 4 0 7L52 76q-4 2-5-2-1-16 0-32z" fill="#f4f4f4" stroke="url(#tvPlay)" strokeWidth="3" />
    </svg>

    {/* audio level meter docked to the right edge */}
    <svg className="absolute right-0 bottom-[124px] h-[114px] w-8" viewBox="0 0 32 114">
      <path d="M13 6q0-5 5-5h14v112H18q-5 0-5-6z" fill="#4d5263" />
      <path d="M25 17v38" stroke="#2c313d" strokeWidth="8" strokeDasharray="2 2" />
      <path d="M25 60v22" stroke="#a9c878" strokeWidth="8" strokeDasharray="2 2" />
      <path d="M25 82v20" stroke="#5fb7b0" strokeWidth="8" strokeDasharray="2 2" />
      <path d="M14 52l10 10-10 8zM5 60l8 10-8 8M12 84V58" fill="#fff" stroke="#fff" strokeWidth="1" />
    </svg>

    <PlayerControls />
  </>
);

const App: React.FC = () => {
  return (
    <div className='relative flex h-screen w-full flex-col overflow-hidden bg-[#f0f0f0] font-["Noto_Sans","Noto_Sans_CJK_SC",sans-serif]'>
      <TitleBar />
      <MenuBar />
      <TabBar />
      <div className="flex min-h-0 flex-1">
        <Sidebar />
        <div className="flex w-[29px] shrink-0 items-center justify-center border-r-2 border-[#777] bg-[#aaa] pr-2">
          <div className="mb-36 flex gap-[3px]">
            <span className="h-20 border-l-2 border-dotted border-[#777]" />
            <span className="h-20 border-l-2 border-dotted border-[#777]" />
          </div>
        </div>
        <ManualPage />
        <div className="w-[14px] shrink-0 border-l-2 border-[#888] bg-[#aaa]" />
        <div className="flex w-8 shrink-0 flex-col items-center bg-[#f0f0f0]">
          <div className="h-[18px] w-full border-2 border-[#777]" />
          <Chevron className="mt-[10px] h-[14px] w-4" />
          <div className="mt-[174px] h-8 w-full bg-[#cbcbcb]" />
        </div>
      </div>
      <StatusBar />
      <Taskbar />
      <Player />
    </div>
  );
};

export default App;
